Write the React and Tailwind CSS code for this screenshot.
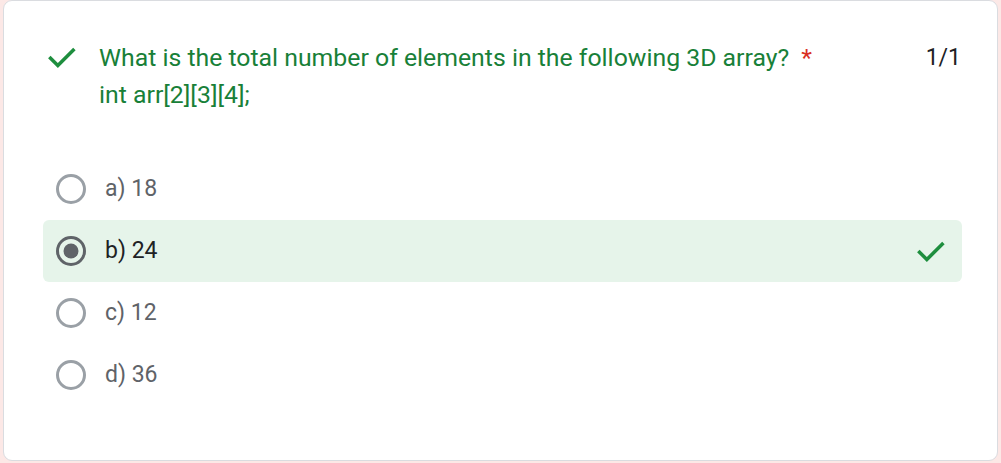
import React from 'react';

const options = [
  { label: 'a) 18', selected: false },
  { label: 'b) 24', selected: true },
  { label: 'c) 12', selected: false },
  { label: 'd) 36', selected: false },
];

function Check({ className }) {
  return (
    <svg viewBox="0 0 24 24" className={className} fill="none">
      <path d="M4.5 12.5l5 5L20 7" stroke="#1e8e3e" strokeWidth="2.4" strokeLinecap="square" />
    </svg>
  );
}

function Radio({ checked }) {
  return (
    <svg viewBox="0 0 32 32" className="w-[32px] h-[32px] shrink-0">
      <circle cx="16" cy="16" r="13.5" fill="none" stroke={checked ? '#5f6368' : '#9aa0a6'} strokeWidth="3" />
      {checked && <circle cx="16" cy="16" r="7.5" fill="#5f6368" />}
    </svg>
  );
}

export default function App() {
  return (
    <div className="w-[1001px] h-[463px] bg-[#fce8e6] pl-[3px] pr-[3px] pb-[2px] font-['Roboto',sans-serif]">
      <div className="h-full bg-white border border-[#dadce0] rounded-[9px] pt-[38px] pl-[39px] pr-[35px]">
        {/* question header */}
        <div className="flex items-start">
          <Check className="w-[35px] h-[35px] mt-[1px] ml-[1px] shrink-0" />
          <div className="ml-[20px] flex-1 text-[24.8px] leading-[37px] text-[#188038]">
            What is the total number of elements in the following 3D array?
            <span className="text-[#d93025] ml-[12px]">*</span>
            <br />
            int arr[2][3][4];
          </div>
          <div className="text-[23px] leading-[37px] text-[#202124] mr-[1px]">1/1</div>
        </div>

        {/* answer options */}
        <div className="mt-[45px]">
          {options.map((o) => (
            <div
              key={o.label}
              className={`flex items-center h-[62px] pl-[12px] pr-[14px] rounded-[6px] ${o.selected ? 'bg-[#e6f4ea]' : ''}`}
            >
              <Radio checked={o.selected} />
              <span className={`ml-[18px] flex-1 text-[23px] ${o.selected ? 'text-[#202124]' : 'text-[#5f6368]'}`}>
                {o.label}
              </span>
              {o.selected && <Check className="w-[35px] h-[35px]" />}
            </div>
          ))}
        </div>
      </div>
    </div>
  );
}
